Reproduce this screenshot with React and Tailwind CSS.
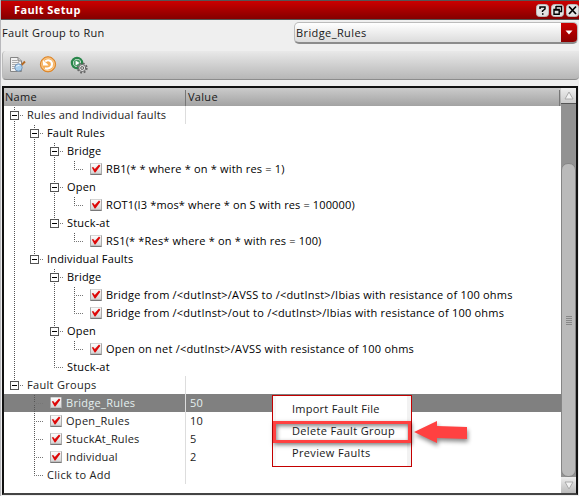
import React from "react";

const rows = [
  { guides: ["full"], box: true, text: "Rules and Individual faults", soft: true, sep: true },
  { guides: ["full", "full"], box: true, text: "Fault Rules" },
  { guides: ["full", "full", "full"], box: true, text: "Bridge" },
  { guides: ["full", "full", "full", "last"], check: true, text: "RB1(* * where * on * with res = 1)" },
  { guides: ["full", "full", "full"], box: true, text: "Open" },
  { guides: ["full", "full", "full", "last"], check: true, text: "ROT1(I3 *mos* where * on S with res = 100000)", tight: true },
  { guides: ["full", "full", "last"], box: true, text: "Stuck-at" },
  { guides: ["full", "full", "none", "last"], check: true, text: "RS1(* *Res* where * on * with res = 100)" },
  { guides: ["full", "last"], box: true, text: "Individual Faults" },
  { guides: ["full", "none", "full"], box: true, text: "Bridge" },
  { guides: ["full", "none", "full", "tee"], check: true, text: "Bridge from /<dutInst>/AVSS to /<dutInst>/Ibias with resistance of 100 ohms", wide: true },
  { guides: ["full", "none", "full", "last"], check: true, text: "Bridge from /<dutInst>/out to /<dutInst>/Ibias with resistance of 100 ohms", wide: true },
  { guides: ["full", "none", "full"], box: true, text: "Open" },
  { guides: ["full", "none", "full", "last"], check: true, text: "Open on net /<dutInst>/AVSS with resistance of 100 ohms", wide: true },
  { guides: ["full", "none", "last"], text: "Stuck-at" },
  { guides: ["last"], box: true, text: "Fault Groups", soft: true, sep: true, loose: true },
  { guides: ["none", "tee"], check: true, text: "Bridge_Rules", value: "50", soft: true, sep: true, loose: true, selected: true },
  { guides: ["none", "tee"], check: true, text: "Open_Rules", value: "10", soft: true, sep: true, loose: true },
  { guides: ["none", "tee"], check: true, text: "StuckAt_Rules", value: "5", soft: true, sep: true },
  { guides: ["none", "tee"], check: true, text: "Individual", value: "2", soft: true, sep: true },
  { guides: ["none", "last"], text: "Click to Add", soft: true, sep: true, loose: true },
];

function Guide({ type, box, own }) {
  const branch = own || type === "tee";
  return (
    <svg width="20" height="18" className="shrink-0 overflow-visible" shapeRendering="crispEdges">
      {type !== "none" && (
        <path d={type === "last" ? "M10.5 1V10" : "M10.5 1V18"} stroke="#555" strokeDasharray="1 1" />
      )}
      {branch && <path d="M10 9.5H20" stroke="#777" strokeDasharray="1 1" />}
      {box && (
        <>
          <rect x="6.5" y="5.5" width="8" height="8" fill="#fff" stroke="#555" />
          <path d="M8 9.5H13" stroke="#000" />
        </>
      )}
    </svg>
  );
}

function Check() {
  return (
    <svg width="12" height="12" className="mt-[3px] ml-[6px] mr-[4px] shrink-0">
      <defs>
        <linearGradient id="chk" x1="0" y1="0" x2="0" y2="1">
          <stop offset="0" stopColor="#fff" />
          <stop offset="1" stopColor="#d4d4d4" />
        </linearGradient>
      </defs>
      <rect width="12" height="12" rx="1" fill="#aaa" />
      <rect x="1" y="0.5" width="10" height="10" fill="url(#chk)" />
      <path d="M0.5 11.5H11.5" stroke="#777" />
      <path d="M1.8 4.6L3.2 4L4.8 6L9 1.6L10.4 2.8L5.4 9.6H4.6Z" fill="#dd0808" />
    </svg>
  );
}

function Row({ row }) {
  const tone = row.selected ? "bg-[#808080] text-[#e4efef]" : row.soft ? "text-[#222]" : "text-black";
  const spacing = row.tight ? "tracking-[0.13px]" : row.wide ? "tracking-[0.22px]" : row.loose ? "tracking-[0.3px]" : "tracking-[0.18px]";
  return (
    <div className={"flex h-[18px] " + tone}>
      <div className={"flex " + (row.sep ? "w-[181px]" : "flex-1")}>
        {row.guides.map((g, i) => (
          <Guide key={i} type={g} own={i === row.guides.length - 1} box={row.box && i === row.guides.length - 1} />
        ))}
        {row.check ? <Check /> : <span className="w-[3px] shrink-0" />}
        <span className={"whitespace-pre leading-[18px] " + spacing}>{row.text}</span>
      </div>
      {row.sep && <div className="flex-1 border-l border-[#ddd] pl-[4px] leading-[18px]">{row.value}</div>}
    </div>
  );
}

function WinButton({ children }) {
  return (
    <svg width="13" height="13" viewBox="0 0 13 13" className="shrink-0">
      <rect x="0.5" y="0.5" width="12" height="12" rx="3" fill="#e4e4e4" stroke="#bbb" />
      {children}
    </svg>
  );
}

export default function App() {
  return (
    <div className="relative flex h-[496px] w-[579px] flex-col overflow-hidden border-l border-[#b8b8bc] bg-[#efefef] font-['Open_Sans','Noto_Sans',sans-serif] text-[11px] tracking-[0.17px] text-[#181818]">
      <header className="flex h-5 shrink-0 items-center border-y border-[#555] bg-linear-to-b from-[#cc0000] to-[#850000] pl-[13px]">
        <h1 className="flex-1 text-[11px] font-bold leading-[18px] tracking-[0.4px] text-white">Fault Setup</h1>
        <div className="flex gap-[2px]">
          <WinButton>
            <path d="M4 5V3H9V5L6.5 7V8M6 10H7.5" fill="none" stroke="#000" strokeWidth="1.5" />
          </WinButton>
          <WinButton>
            <path d="M5 2.5H10.5V7.5H8.5M5 2V5" fill="none" stroke="#000" strokeWidth="1.4" />
            <path d="M3 5.5H8.2V10.2H3ZM3 6H8" fill="none" stroke="#000" strokeWidth="1.4" />
          </WinButton>
          <WinButton>
            <path d="M3 2.5L10 10M10 2.5L3 10" stroke="#000" strokeWidth="1.7" />
          </WinButton>
        </div>
      </header>
      <div className="flex h-[31px] shrink-0 pt-[2px]">
        <label className="w-[293px] pl-[1px] leading-[22px] tracking-[0.3px]">Fault Group to Run</label>
        <div className="flex h-[22px] w-[284px] overflow-hidden rounded-[5px] border border-b-2 border-[#bbb] border-b-[#8b8b8b] bg-linear-to-b from-white to-[#dcdcdc]">
          <span className="flex-1 pl-[1px] leading-[20px] tracking-[0.4px]">Bridge_Rules</span>
          <span className="flex w-[16px] items-center justify-center bg-linear-to-b from-[#cc0000] to-[#8c0000]">
            <svg width="8" height="5"><path d="M0.5 0.5H7.5L4 4.5Z" fill="#fff" /></svg>
          </span>
        </div>
      </div>
      <div className="ml-[1px] flex h-[29px] shrink-0 rounded-b-[4px] rounded-tl-[4px] border-b border-l border-[#8c8c8c] border-l-[#bbb] bg-linear-to-b from-[#e9e9e9] to-[#b7b7b7] pt-[5px] pl-[6px]">
        <svg width="17" height="17" viewBox="0 0 17 17">
          <path d="M1.5 1.5H9L12.5 5V15.5H1.5Z" fill="#f2f2f2" stroke="#858585" />
          <path d="M9 1.5V5H12.5" fill="#ccc" stroke="#858585" />
          <path d="M3 4.5H8M3 6.5H10M3 8.5H7M3 10.5H6M3 12.5H6" stroke="#aaa" />
          <path d="M12.5 9L16 5.5" stroke="#b56a24" strokeWidth="2" />
          <circle cx="9.5" cy="11.5" r="3.7" fill="#a9cfee" stroke="#7796b8" />
          <path d="M7.5 11Q8.3 8.8 10.5 9.5" fill="none" stroke="#e9f6ff" />
        </svg>
        <svg width="18" height="18" viewBox="0 0 18 18" className="ml-[13px]">
          <circle cx="9" cy="8.3" r="7.6" fill="#f0993a" stroke="#db8428" />
          <circle cx="9" cy="8.3" r="6.3" fill="#f5ad55" stroke="#f9cf98" />
          <path d="M6.2 5.6C8.5 3.2 12.6 4.2 13 7.8C13.3 11 10.2 13.4 6 12.2" fill="none" stroke="#fff" strokeWidth="2.2" />
          <path d="M4 4V9.4H9.6L7.9 7.6L6 5.9Z" fill="#fff" />
        </svg>
        <svg width="18" height="18" viewBox="0 0 18 18" className="ml-[13px]">
          <circle cx="7" cy="7" r="5.1" fill="#fff" stroke="#28864a" strokeWidth="2.2" />
          <circle cx="7" cy="7" r="3.4" fill="#4c9c68" />
          <path d="M5.6 4.6L9.6 7L5.6 9.4Z" fill="#fff" />
          <circle cx="12.2" cy="12" r="4.6" fill="none" stroke="#666" strokeWidth="1.7" strokeDasharray="1.9 1.71" />
          <circle cx="12.2" cy="12" r="3.5" fill="#e9e9e9" stroke="#666" />
          <circle cx="12.2" cy="12" r="1.5" fill="#c8c8c8" stroke="#666" />
        </svg>
      </div>
      <main className="mt-[6px] ml-[1px] flex h-[409px] w-[576px] shrink-0 border-2 border-[#111] border-b-[#444] bg-white">
        <section className="w-[557px]">
          <div className="flex h-[18px] bg-linear-to-b from-[#cbcbcb] to-[#a3a3a3] leading-[18px]">
            <span className="w-[181px] pl-[1px] tracking-[0.3px]">Name</span>
            <span className="mt-[2px] flex-1 border-l border-[#777] pl-[2px] leading-[14px] tracking-[0.3px]">Value</span>
            <span className="mt-[2px] mr-px w-px bg-[#777]" />
          </div>
          {rows.map((row, i) => <Row key={i} row={row} />)}
        </section>
        <aside className="flex w-[15px] flex-col bg-[#929292]">
          <div className="flex h-4 items-center justify-center border-b border-[#555] bg-linear-to-b from-[#eee] to-[#ccc]">
            <svg width="10" height="9"><path d="M1 8L5 1L9 8Z" fill="#f3f3f3" stroke="#aaa" /></svg>
          </div>
          <div className="mt-[59px] flex h-[314px] flex-col items-center justify-center gap-px rounded-[7px] border border-[#858585] bg-[#bababa]">
            <i className="h-px w-[6px] bg-[#888]" />
            <i className="h-px w-[6px] bg-[#888]" />
            <i className="h-px w-[6px] bg-[#888]" />
            <i className="h-px w-[6px] bg-[#888]" />
            <i className="h-px w-[6px] bg-[#888]" />
          </div>
          <div className="flex flex-1 items-center justify-center bg-linear-to-b from-[#eee] to-[#bbb]">
            <svg width="10" height="9"><path d="M1 1L5 8L9 1Z" fill="#f3f3f3" stroke="#aaa" /></svg>
          </div>
        </aside>
      </main>
      <div className="absolute top-[395px] left-[271px] h-[72px] w-[140px] border border-[#c40000] bg-white pt-[3px] tracking-[0.35px] shadow-[inset_-4px_0_0_#f2f2f2,inset_3px_0_0_#f7f7f7]">
        <div className="h-[22px] pl-[19px] leading-[20px] tracking-[0.25px]">Import Fault File</div>
        <div className="h-[22px] w-[138px] border-3 border-[#ff4141] pl-[16px] leading-[14px] shadow-[1px_2px_4px_rgba(0,0,0,.5),inset_1px_2px_4px_rgba(0,0,0,.5)]">Delete Fault Group</div>
        <div className="h-[22px] pl-[19px] leading-[20px]">Preview Faults</div>
      </div>
      <svg width="60" height="34" className="absolute top-[418px] left-[412px] drop-shadow-[1px_3px_2px_rgba(0,0,0,.45)]">
        <path d="M1 14L24 3V8L54 9V21L24 20V25Z" fill="#ff4141" />
      </svg>
    </div>
  );
}
